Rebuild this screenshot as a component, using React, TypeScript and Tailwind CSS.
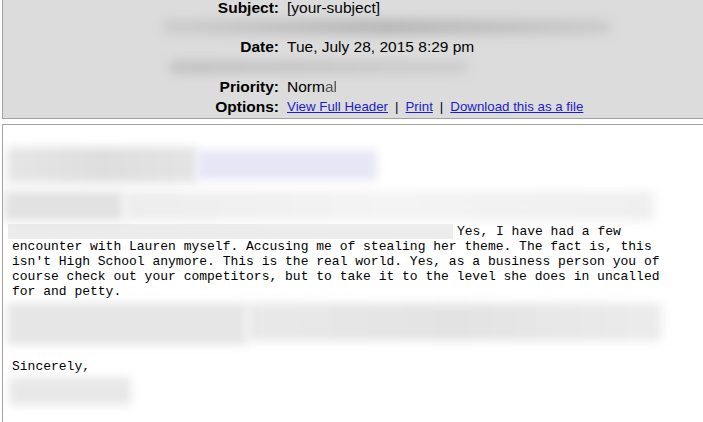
import React from "react";

const sans = { fontFamily: '"Liberation Sans", Arial, Helvetica, sans-serif' };
const mono = { fontFamily: '"Liberation Mono", "Courier New", monospace' };

function Label({ children, first }: { children: React.ReactNode; first?: boolean }) {
  return (
    <div className={`text-right font-bold text-black ${first ? "leading-[15px] h-[17px]" : "leading-[20px] h-[20px]"}`}>
      {children}
    </div>
  );
}

function Value({ children, first }: { children: React.ReactNode; first?: boolean }) {
  return (
    <div className={`text-black whitespace-nowrap ${first ? "leading-[15px] h-[17px]" : "leading-[20px] h-[20px]"}`}>
      {children}
    </div>
  );
}

function Blur({ className }: { className: string }) {
  return <div className={`blur-[5px] ${className}`} />;
}

export default function App() {
  return (
    <div className="w-[703px] h-[422px] overflow-hidden bg-white" style={sans}>
      {/* Header panel */}
      <div className="ml-[2px] h-[119px] bg-[#dcdcdc] border-l border-b border-[#a3a3a3] overflow-hidden">
        <div className="grid grid-cols-[276px_1fr] gap-x-[8px] text-[15.5px]">
          <Label first>Subject:</Label>
          <Value first>[your-subject]</Value>

          <div className="col-span-2 h-[20px] flex items-center">
            <Blur className="ml-[158px] h-[16px] w-[450px] rounded-full bg-gradient-to-r from-[#cfcfcf] via-[#b9b9b9] to-[#cdcdcd]" />
          </div>

          <Label>Date:</Label>
          <Value>Tue, July 28, 2015 8:29 pm</Value>

          <div className="col-span-2 h-[20px] flex items-center">
            <Blur className="ml-[166px] h-[14px] w-[300px] rounded-full bg-gradient-to-r from-[#c4c4c4] via-[#c9c9c9] to-[#cfcfcf]" />
          </div>

          <Label>Priority:</Label>
          <Value>
            Norm<span className="text-[#555] blur-[0.6px]">al</span>
          </Value>

          <Label>Options:</Label>
          <div className="leading-[20px] h-[20px] whitespace-nowrap text-[13.3px] text-black flex items-center gap-[7px]">
            <a className="text-[#1c1cc8] underline">View Full Header</a>
            <span>|</span>
            <a className="text-[#1c1cc8] underline">Print</a>
            <span>|</span>
            <a className="text-[#1c1cc8] underline">Download this as a file</a>
          </div>
        </div>
      </div>

      {/* Message body box */}
      <div className="ml-[2px] mt-[5px] h-[300px] border-l border-t border-[#a3a3a3] overflow-hidden">
        <div className="flex flex-col pt-[22px]">
          {/* blurred sender/link line */}
          <div className="flex h-[36px] ml-[4px]">
            <Blur className="h-[36px] w-[190px] bg-gradient-to-r from-[#e6e6e6] via-[#dedede] to-[#e4e4e4]" />
            <Blur className="h-[30px] mt-[3px] w-[180px] bg-[#e6e6f6]" />
          </div>
          {/* blurred band */}
          <div className="mt-[8px] h-[30px] ml-[1px] w-[650px] flex">
            <Blur className="h-[30px] w-[120px] bg-[#e2e2e2]" />
            <Blur className="h-[30px] w-[530px] bg-gradient-to-r from-[#ededed] via-[#f4f4f4] to-[#efefef]" />
          </div>

          <div className="mt-[3px] text-[13px] leading-[15px] text-black pl-[9px] pr-[4px]" style={mono}>
            <div className="flex items-center h-[15px]">
              <div className="ml-[-4px] h-[15px] w-[445px] bg-[#ececec]" />
              <span className="ml-[4px] whitespace-pre">Yes, I have had a few</span>
            </div>
            <div className="whitespace-pre">encounter with Lauren myself. Accusing me of stealing her theme. The fact is, this</div>
            <div className="whitespace-pre">isn't High School anymore. This is the real world. Yes, as a business person you of</div>
            <div className="whitespace-pre">course check out your competitors, but to take it to the level she does in uncalled</div>
            <div className="whitespace-pre">for and petty.</div>
          </div>

          <div className="mt-[4px] ml-[4px] h-[42px] w-[655px] flex">
            <Blur className="h-[42px] w-[240px] bg-[#e6e6e6]" />
            <Blur className="h-[38px] w-[415px] bg-gradient-to-r from-[#e9e9e9] via-[#e3e3e3] to-[#ececec]" />
          </div>

          <div className="mt-[14px] text-[13px] leading-[15px] text-black pl-[9px]" style={mono}>
            Sincerely,
          </div>
          <Blur className="mt-[3px] ml-[6px] h-[28px] w-[122px] bg-[#e8e8e8]" />
        </div>
      </div>
    </div>
  );
}
